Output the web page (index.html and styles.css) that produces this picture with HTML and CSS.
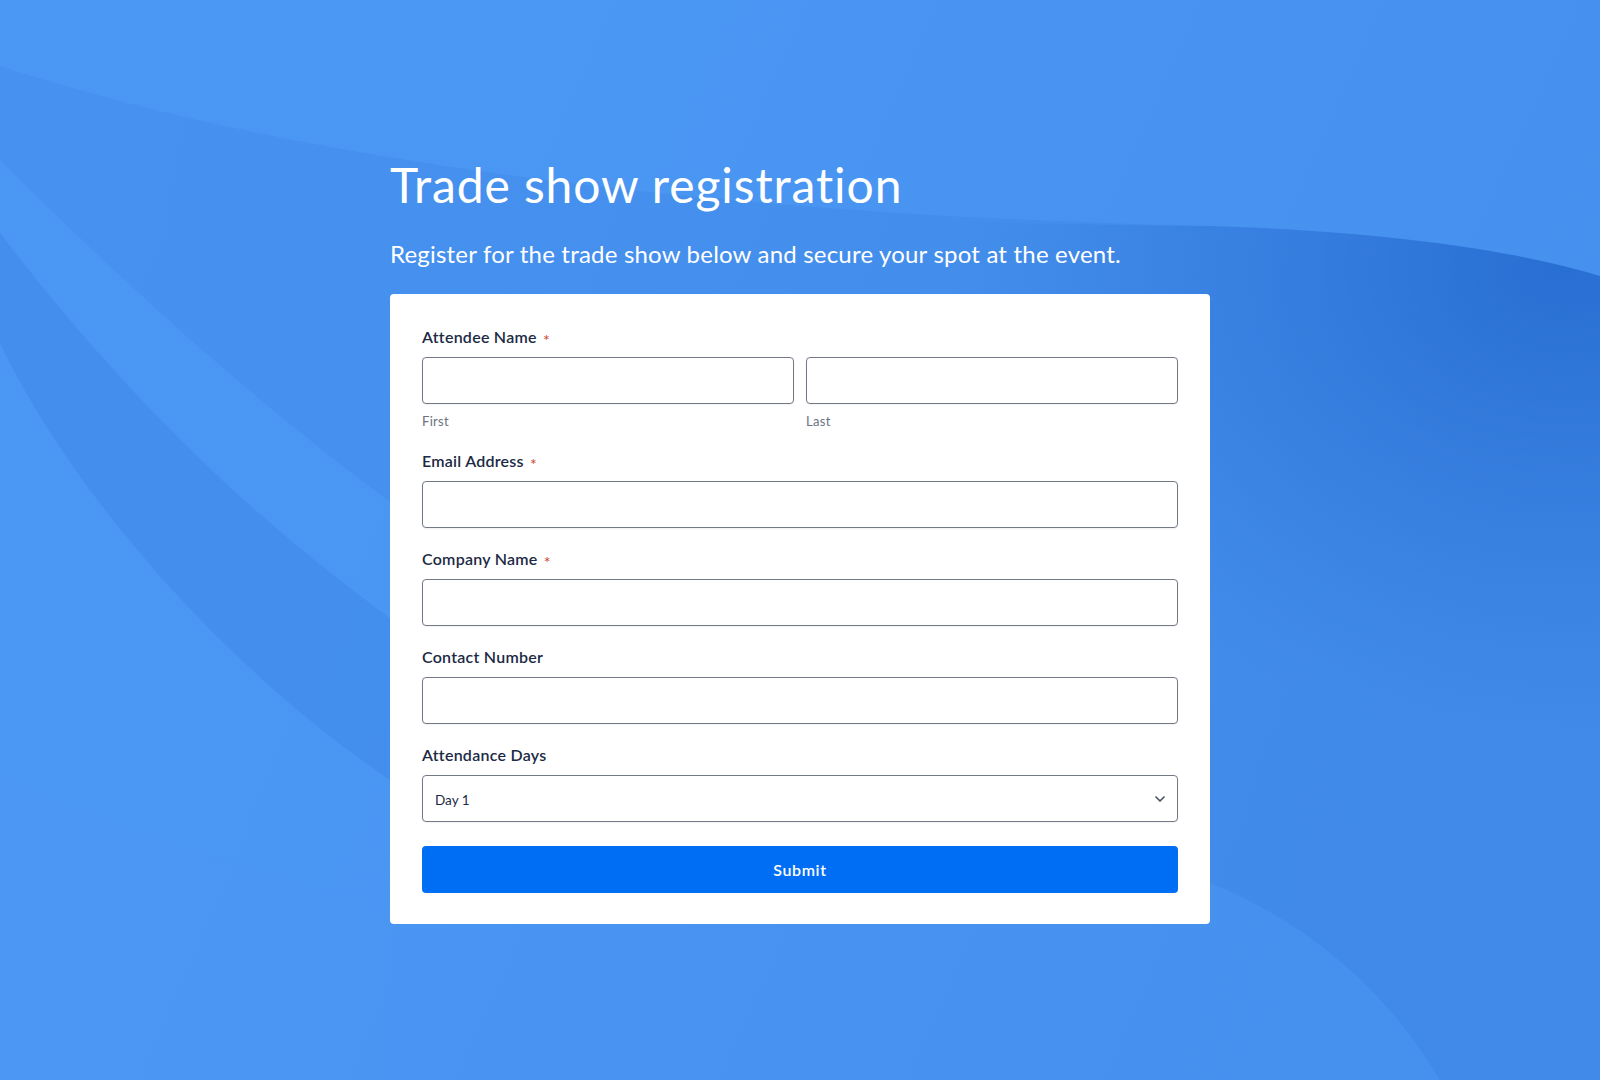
FILE: index.html
```html
<!DOCTYPE html>
<html lang="en">
<head>
<meta charset="utf-8">
<title>Trade show registration</title>
<link rel="stylesheet" href="styles.css">
</head>
<body>
<svg class="bg" viewBox="0 0 1600 1080" preserveAspectRatio="none" aria-hidden="true">
  <defs>
    <linearGradient id="base" x1="0" y1="0" x2="1" y2="0.3">
      <stop offset="0" stop-color="#4b97f4"/>
      <stop offset="0.4" stop-color="#4a96f3"/>
      <stop offset="1" stop-color="#4690ee"/>
    </linearGradient>
    <linearGradient id="topband" gradientUnits="userSpaceOnUse" x1="0" y1="0" x2="1600" y2="0">
      <stop offset="0" stop-color="#2a6fd0" stop-opacity="0.12"/>
      <stop offset="1" stop-color="#2a6fd0" stop-opacity="0.2"/>
    </linearGradient>
    <radialGradient id="darkcorner" gradientUnits="userSpaceOnUse" cx="1560" cy="270" r="620" gradientTransform="translate(1560 270) scale(1 0.75) translate(-1560 -270)">
      <stop offset="0" stop-color="#1659c2" stop-opacity="0.55"/>
      <stop offset="0.55" stop-color="#1c60c8" stop-opacity="0.25"/>
      <stop offset="1" stop-color="#2a6fd0" stop-opacity="0"/>
    </radialGradient>
  </defs>
  <rect x="0" y="0" width="1600" height="1080" fill="url(#base)"/>
  <path d="M0,66 C320,170 760,216 1210,226 C1400,232 1520,252 1600,276 L1600,1080 L1440,1080 C1380,980 1300,920 1210,883 C1000,800 820,740 700,690 C420,560 160,320 0,160 Z" fill="url(#topband)"/>
  <path d="M760,216 C900,221 1050,224 1210,226 C1400,232 1520,252 1600,276 L1600,1080 L760,1080 Z" fill="url(#darkcorner)"/>
  <path d="M0,233 C120,390 250,520 420,640 C500,700 560,760 600,820 L390,780 C200,650 60,470 0,343 Z" fill="#2f78da" fill-opacity="0.22"/>
  <path d="M0,777 C140,840 280,880 390,910 L390,1080 L0,1080 Z" fill="#56a0f8" fill-opacity="0.12"/>
</svg>

<main class="page">
  <h1 class="title">Trade show registration</h1>
  <p class="subtitle">Register for the trade show below and secure your spot at the event.</p>

  <form class="card">
    <div class="field field-name">
      <label class="label">Attendee Name <span class="req">*</span></label>
      <div class="name-row">
        <div class="name-col">
          <input class="input" type="text">
          <span class="sublabel">First</span>
        </div>
        <div class="name-col">
          <input class="input" type="text">
          <span class="sublabel">Last</span>
        </div>
      </div>
    </div>

    <div class="field">
      <label class="label">Email Address <span class="req">*</span></label>
      <input class="input" type="email">
    </div>

    <div class="field">
      <label class="label">Company Name <span class="req">*</span></label>
      <input class="input" type="text">
    </div>

    <div class="field">
      <label class="label">Contact Number</label>
      <input class="input" type="tel">
    </div>

    <div class="field field-last">
      <label class="label">Attendance Days</label>
      <div class="select-wrap">
        <select class="input select">
          <option>Day 1</option>
          <option>Day 2</option>
          <option>Both Days</option>
        </select>
        <svg class="chevron" viewBox="0 0 10 6" aria-hidden="true">
          <path d="M1 1 L5 5 L9 1" fill="none" stroke="#4b5563" stroke-width="1.7" stroke-linecap="round" stroke-linejoin="round"/>
        </svg>
      </div>
    </div>

    <button class="submit" type="button">Submit</button>
  </form>
</main>
</body>
</html>
```

FILE: styles.css
```css
* {
  box-sizing: border-box;
}

html, body {
  margin: 0;
  padding: 0;
  height: 100%;
}

body {
  font-family: Lato, "Open Sans", "Liberation Sans", sans-serif;
  background: #4690ee;
  position: relative;
  overflow: hidden;
  font-variant-ligatures: none;
}

.bg {
  position: absolute;
  left: 0;
  top: 0;
  width: 1600px;
  height: 1080px;
  z-index: 0;
}

.page {
  position: relative;
  z-index: 1;
  width: 820px;
  margin: 0 auto;
  padding-top: 156px;
}

.title {
  margin: 0;
  font-size: 48px;
  line-height: 1.2;
  font-weight: 400;
  color: #ffffff;
  letter-spacing: 0.9px;
}

.subtitle {
  margin: 26px 0 26px;
  font-size: 24px;
  line-height: 1.2;
  font-weight: 400;
  color: #ffffff;
  letter-spacing: 0.2px;
}

.card {
  background: #ffffff;
  border-radius: 4px;
  padding: 32px 32px 31px;
  display: flex;
  flex-direction: column;
}

.field {
  display: flex;
  flex-direction: column;
  margin-bottom: 20px;
}

.field-name {
  margin-bottom: 19px;
}

.field-last {
  margin-bottom: 24px;
}

.label {
  display: block;
  height: 22px;
  font-size: 16px;
  line-height: 22px;
  font-weight: 600;
  color: #1c2a45;
  letter-spacing: 0.25px;
  margin-bottom: 9px;
}

.req {
  color: #d2412c;
  font-size: 16px;
  font-weight: 400;
  line-height: 0;
  margin-left: 2px;
  vertical-align: -3px;
}

.name-row {
  display: grid;
  grid-template-columns: 1fr 1fr;
  gap: 12px;
}

.name-col {
  display: flex;
  flex-direction: column;
}

.sublabel {
  margin-top: 7px;
  font-size: 13px;
  line-height: 20px;
  color: #6b7280;
  letter-spacing: 0.3px;
}

.input {
  display: block;
  width: 100%;
  height: 47px;
  border: 1px solid #737984;
  border-radius: 4px;
  background: #ffffff;
  font-family: inherit;
  font-size: 13.5px;
  color: #1c2a45;
  padding: 0 12px;
  outline: none;
  box-shadow: 0 1px 2px rgba(16, 24, 40, 0.06);
}

.select-wrap {
  position: relative;
}

.select {
  appearance: none;
  -webkit-appearance: none;
  padding-top: 2px;
}

.chevron {
  position: absolute;
  right: 13px;
  top: 21px;
  width: 10px;
  height: 6px;
  pointer-events: none;
}

.submit {
  height: 47px;
  border: none;
  border-radius: 4px;
  background: #006ef4;
  color: #ffffff;
  font-family: inherit;
  font-size: 16px;
  font-weight: 600;
  letter-spacing: 0.6px;
  cursor: pointer;
}
```
